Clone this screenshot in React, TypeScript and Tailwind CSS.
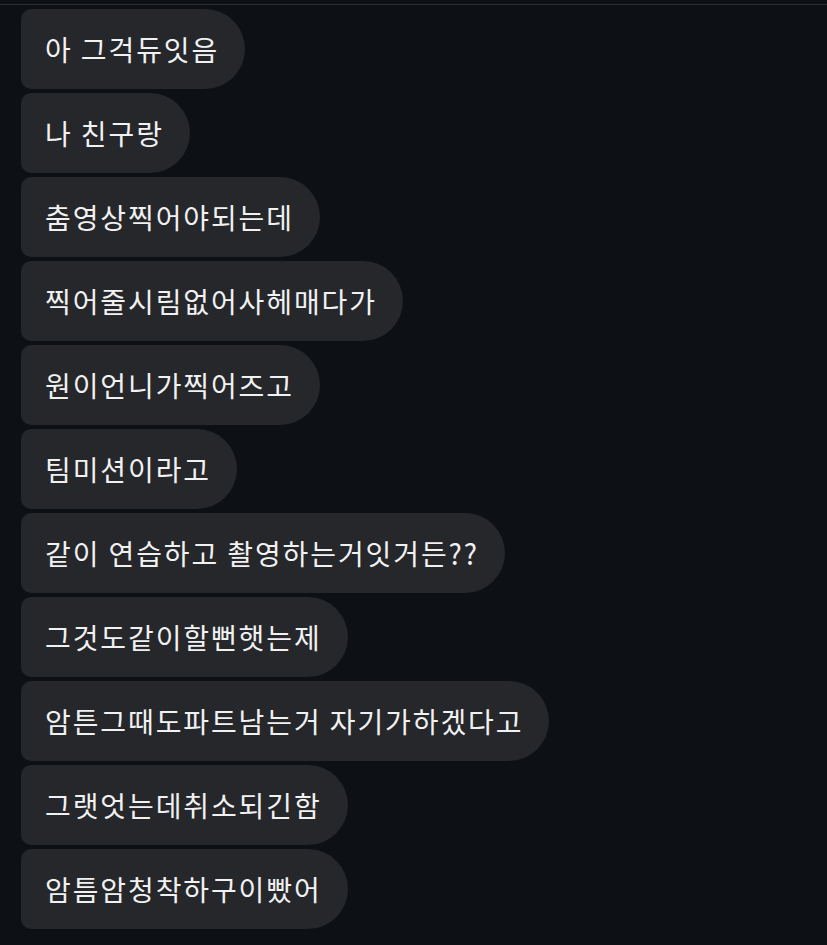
const messages = [
  "아 그걱듀잇음",
  "나 친구랑",
  "춤영상찍어야되는데",
  "찍어줄시림없어사헤매다가",
  "원이언니가찍어즈고",
  "팀미션이라고",
  "같이 연습하고 촬영하는거잇거든??",
  "그것도같이할뻔햇는제",
  "암튼그때도파트남는거 자기가하겠다고",
  "그랫엇는데취소되긴함",
  "암틈암청착하구이빴어",
]

export default function App() {
  return (
    <div className="w-[827px] h-[945px] bg-[#0d1015] overflow-hidden">
      <div className="h-[4px]" />
      <div className="h-px bg-[#2c2f34]" />
      <div
        className="flex flex-col items-start gap-1 pt-1 pl-[21px]"
        style={{ fontFamily: "'Noto Sans CJK KR', 'Noto Sans', sans-serif" }}
      >
        {messages.map((m, i) => (
          <div
            key={i}
            className="h-[80px] flex items-center pl-6 pr-[26px] bg-[#25272b] text-[#f1f1f2] text-[28px] tracking-[1.9px] rounded-l-[10px] rounded-r-[40px] whitespace-nowrap"
          >
            {m}
          </div>
        ))}
      </div>
    </div>
  )
}
